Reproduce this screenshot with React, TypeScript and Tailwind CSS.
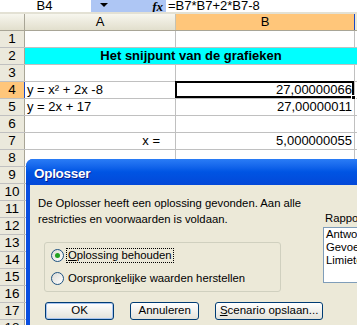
const rows = Array.from({ length: 18 }, (_, i) => i + 1);

function Cell({ n }: { n: number }) {
  if (n === 2) {
    return (
      <div className="flex h-full flex-1 items-center justify-center bg-[#00ffff] font-bold">
        Het snijpunt van de grafieken
      </div>
    );
  }
  const a: Record<number, string> = { 4: "y = x² + 2x -8", 5: "y = 2x + 17" };
  const b: Record<number, string> = { 4: "27,00000066", 5: "27,00000011", 7: "5,000000055" };
  return (
    <>
      <div className={`flex h-full w-[151px] items-center border-r border-[#c0c0c0] px-[2px] ${n === 7 ? "justify-end pr-[15px]" : ""}`}>
        {n === 7 ? "x =" : a[n]}
      </div>
      <div className="relative flex h-full w-[179px] items-center justify-end border-r border-[#c0c0c0] pr-[2px]">
        {b[n]}
        {n === 4 && (
          <>
            <div className="absolute -left-[1px] -top-[1px] bottom-0 right-0 border-2 border-black" />
            <div className="absolute -bottom-[2px] -right-[2px] h-[5px] w-[5px] border border-white bg-black" />
          </>
        )}
      </div>
    </>
  );
}

function Radio({ on, label }: { on?: boolean; label: [string, string, string] }) {
  return (
    <div className="flex h-[13px] items-center gap-[3px] leading-[13px]">
      <span className="flex h-[13px] w-[13px] shrink-0 items-center justify-center rounded-full border border-[#1c5180] bg-gradient-to-br from-[#dcdbd5] to-white">
        {on && <span className="h-[5px] w-[5px] rounded-full bg-[#21a121]" />}
      </span>
      <span className={on ? "px-[1px] outline-1 outline-dotted outline-black" : "px-[1px]"}>
        {label[0]}
        <span className="underline">{label[1]}</span>
        {label[2]}
      </span>
    </div>
  );
}

function Btn({ w, children, def }: { w: string; children: React.ReactNode; def?: boolean }) {
  return (
    <div
      className={`flex h-[18px] ${w} items-center justify-center rounded-[3px] border border-[#003c74] bg-gradient-to-b from-white to-[#e3e2da] text-[11.5px] ${
        def ? "shadow-[inset_0_0_0_1px_#a8c4f0]" : ""
      }`}
    >
      {children}
    </div>
  );
}

export default function App() {
  return (
    <div className="relative h-[325px] w-[357px] overflow-hidden bg-white font-['Liberation_Sans',Arial,sans-serif] text-[13px] text-black">
      {/* formula bar */}
      <div className="flex h-[12px] items-end overflow-hidden leading-none">
        <div className="flex h-full w-[91px] items-end justify-center pr-[2px]">B4</div>
        <div className="relative flex h-full w-[75px] items-center bg-[#aec6f4]">
          <span className="ml-[9px] mt-[-3px] h-0 w-0 border-x-[4px] border-t-[4px] border-x-transparent border-t-black" />
          <span className="ml-auto mr-[3px] font-['Liberation_Serif',serif] text-[13px] font-bold italic">fx</span>
        </div>
        <div className="flex h-full flex-1 items-end pl-[2px]">=B7*B7+2*B7-8</div>
      </div>
      <div className="h-[2px] bg-[#e3e1d4]" />

      {/* column header */}
      <div className="flex h-[17px] border-b border-[#a8a596]">
        <div className="w-[25px] border-r border-[#a8a596] bg-gradient-to-b from-[#f7f6ee] to-[#e2dfcd]" />
        <div className="flex w-[151px] items-center justify-center border-r border-[#c5c2b2] bg-gradient-to-b from-[#f7f6ee] to-[#e2dfcd]">
          A
        </div>
        <div className="flex w-[179px] items-center justify-center border-r border-[#1a48c4] bg-[#ffc67a]">B</div>
        <div className="flex-1 bg-[#ece9d8]" />
      </div>

      {rows.map((n) => (
        <div key={n} className="flex h-[17px] border-b border-[#c0c0c0]">
          <div
            className={`flex h-full w-[25px] items-center justify-center border-r text-[13.5px] ${
              n === 4 ? "border-[#1a48c4] bg-[#ffc67a]" : "border-[#a8a596] bg-[#ebe9dc]"
            }`}
          >
            {n}
          </div>
          <Cell n={n} />
        </div>
      ))}

      {/* solver dialog */}
      <div className="absolute left-[26px] top-[159px] h-[180px] w-[345px] overflow-hidden rounded-t-[7px] bg-[#0a4fe0] font-['Liberation_Sans',Arial,sans-serif] text-[11.3px]">
        <div className="flex h-[26px] items-center bg-gradient-to-b from-[#2a7cf6] via-[#0054e3] to-[#0348d8] pl-[8px] pt-[4px] text-[13.5px] font-bold tracking-[-0.3px] text-white [text-shadow:1px_1px_0_#0a1e8c]">
          Oplosser
        </div>
        <div className="ml-[4px] flex h-full bg-[#ece9d8]">
          <div className="w-[293px] shrink-0">
            <p className="w-[290px] pl-[8px] pt-[10px] leading-[16px]">
              De Oplosser heeft een oplossing gevonden. Aan alle restricties en voorwaarden is voldaan.
            </p>
            <div className="ml-[14px] mt-[15px] flex h-[50px] w-[237px] flex-col gap-[10px] rounded-[3px] border border-[#d0d0bf] pl-[6px] pt-[6px]">
              <Radio on label={["", "O", "plossing behouden"]} />
              <Radio label={["Oorspron", "k", "elijke waarden herstellen"]} />
            </div>
            <div className="ml-[15px] mt-[10px] flex gap-[16px]">
              <Btn w="w-[75px]" def>OK</Btn>
              <Btn w="w-[75px]">Annuleren</Btn>
              <Btn w="w-[117px]">
                <span className="underline">S</span>cenario opslaan...
              </Btn>
            </div>
          </div>
          <div className="pt-[27px]">
            <div className="pl-[2px] leading-[13px]">Rapporten</div>
            <div className="mt-[2px] h-[56px] w-[60px] border border-[#7f9db9] bg-white pl-[2px] leading-[13px]">
              <div>Antwoord</div>
              <div>Gevoeligheid</div>
              <div>Limieten</div>
            </div>
          </div>
        </div>
      </div>
    </div>
  );
}
